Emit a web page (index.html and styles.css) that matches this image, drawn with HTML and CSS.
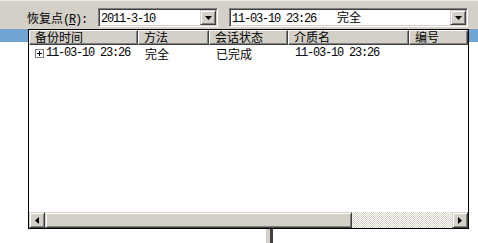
FILE: index.html
```html
<!DOCTYPE html>
<html>
<head>
<meta charset="utf-8">
<link rel="stylesheet" href="styles.css">
</head>
<body>
<div class="screen">
  <div class="toolbar">
    <label class="lbl">恢复点<span class="n">(<u>R</u>):</span></label>
    <div class="combo c1">
      <span class="val"><span class="n">2011-3-10</span></span>
      <span class="btn"><svg width="7" height="4" viewBox="0 0 7 4"><polygon points="0,0 7,0 3.5,4" fill="#000"/></svg></span>
    </div>
    <div class="combo c2">
      <span class="val"><span class="n">11-03-10 23:26</span><span class="meth">完全</span></span>
      <span class="btn"><svg width="7" height="4" viewBox="0 0 7 4"><polygon points="0,0 7,0 3.5,4" fill="#000"/></svg></span>
    </div>
  </div>
  <div class="band"></div>
  <div class="main">
    <div class="pane pane-left"></div>
    <div class="splitter"></div>
    <div class="pane pane-right"></div>
  </div>

  <div class="dropdown">
    <div class="grid head">
      <div class="hc">备份时间</div>
      <div class="hc">方法</div>
      <div class="hc">会话状态</div>
      <div class="hc">介质名</div>
      <div class="hc">编号</div>
    </div>
    <div class="body">
      <div class="grid row">
        <div class="cell first"><svg class="plus" width="9" height="9" viewBox="0 0 9 9"><rect x="0.5" y="0.5" width="8" height="8" fill="#fff" stroke="#808080"/><path d="M2 4.5H7M4.5 2V7" stroke="#000"/></svg><span class="n">11-03-10 23:26</span></div>
        <div class="cell">完全</div>
        <div class="cell">已完成</div>
        <div class="cell"><span class="n">11-03-10 23:26</span></div>
        <div class="cell"></div>
      </div>
    </div>
    <div class="hscroll">
      <div class="sbtn"><svg width="4" height="7" viewBox="0 0 4 7"><polygon points="4,0 4,7 0,3.5" fill="#000"/></svg></div>
      <div class="thumb"></div>
      <div class="track"></div>
      <div class="sbtn"><svg width="4" height="7" viewBox="0 0 4 7"><polygon points="0,0 0,7 4,3.5" fill="#000"/></svg></div>
    </div>
  </div>
</div>
</body>
</html>
```

FILE: styles.css
```css
* { box-sizing: border-box; }
html, body { margin: 0; padding: 0; }
body {
  width: 478px;
  height: 243px;
  overflow: hidden;
  background: #fff;
  font-family: "Noto Sans CJK SC", "Liberation Mono", monospace;
  font-size: 12px;
  color: #000;
}
.n {
  font-family: "Liberation Mono", monospace;
  letter-spacing: -1.2px;
}
.screen {
  position: relative;
  width: 478px;
  height: 243px;
  display: flex;
  flex-direction: column;
}
.toolbar {
  height: 29px;
  flex: none;
  background: #d4d0c8;
  border-top: 1px solid #ece9e2;
  display: flex;
  align-items: flex-start;
  padding: 7px 0 0 27px;
}
.lbl {
  width: 71px;
  height: 19px;
  line-height: 19px;
  white-space: nowrap;
}
.combo {
  position: relative;
  height: 19px;
  background: #fff;
  border: 1px solid;
  border-color: #808080 #fff #fff #808080;
  box-shadow: inset 1px 1px #404040, inset -1px -1px #d4d0c8;
  display: flex;
  align-items: center;
  padding: 1px 1px 1px 2px;
}
.c1 { width: 120px; margin-right: 11px; }
.c2 { width: 239px; }
.val {
  flex: 1;
  line-height: 15px;
  white-space: nowrap;
}
.meth { margin-left: 21px; }
.btn {
  width: 16px;
  height: 15px;
  flex: none;
  background: #d4d0c8;
  border: 1px solid;
  border-color: #d4d0c8 #404040 #404040 #d4d0c8;
  box-shadow: inset 1px 1px #fff, inset -1px -1px #808080;
  display: flex;
  align-items: center;
  justify-content: center;
}
.btn svg { display: block; margin-top: 1px; }
.band {
  height: 13px;
  flex: none;
  background: #6fa4d0;
}
.main {
  flex: 1;
  display: flex;
}
.pane-left { width: 266px; }
.pane-right { flex: 1; }
.splitter {
  width: 7px;
  background: #d4d0c8;
  border-right: 3px solid #404040;
}
.dropdown {
  position: absolute;
  left: 28px;
  top: 29px;
  width: 441px;
  height: 200px;
  border: 1px solid #000;
  background: #fff;
  display: flex;
  flex-direction: column;
}
.grid {
  display: grid;
  grid-template-columns: 109px 71px 79px 121px 1fr;
}
.head { height: 15px; flex: none; position: relative; z-index: 1; }
.hc {
  background: #d4d0c8;
  border: 1px solid;
  border-color: #fff #404040 #404040 #fff;
  box-shadow: inset -1px -1px #808080;
  padding-left: 5px;
  line-height: 12px;
  white-space: nowrap;
}
.body { flex: 1; }
.row { height: 15px; margin-top: 1px; }
.cell {
  padding-left: 7px;
  white-space: nowrap;
  line-height: 15px;
  height: 15px;
  display: flex;
  align-items: center;
}
.cell.first { padding-left: 6px; }
.plus { display: block; margin-right: 2px; flex: none; }
.hscroll {
  height: 16px;
  flex: none;
  display: flex;
}
.sbtn, .thumb {
  height: 16px;
  background: #d4d0c8;
  border: 1px solid;
  border-color: #d4d0c8 #404040 #404040 #d4d0c8;
  box-shadow: inset 1px 1px #fff, inset -1px -1px #808080;
}
.sbtn {
  width: 16px;
  flex: none;
  display: flex;
  align-items: center;
  justify-content: center;
}
.sbtn svg { display: block; }
.thumb { width: 307px; flex: none; }
.track {
  flex: 1;
  background-color: #fff;
  background-image: conic-gradient(#d4d0c8 25%, #fff 0 50%, #d4d0c8 0 75%, #fff 0);
  background-size: 2px 2px;
}
```
